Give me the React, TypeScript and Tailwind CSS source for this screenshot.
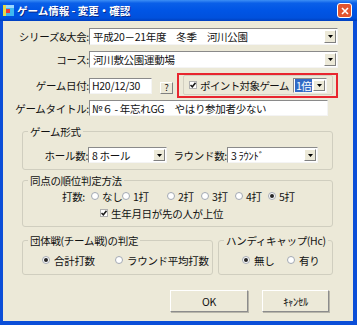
import React from "react";

function DropBtn() {
  return (
    <span className="my-[1px] mr-[1px] flex w-[12px] shrink-0 items-center justify-center border border-t-white border-l-white border-b-[#808080] border-r-[#808080] bg-[#ece9d8]">
      <svg width="5" height="3" viewBox="0 0 5 3">
        <path d="M0 0H5L2.5 3Z" fill="#000" />
      </svg>
    </span>
  );
}

function Combo({ value, className }: { value: React.ReactNode; className: string }) {
  return (
    <div
      className={`flex shrink-0 items-stretch border border-t-[#8a8a8a] border-l-[#8a8a8a] border-b-[#f4f4f4] border-r-[#f4f4f4] bg-white ${className}`}
    >
      <div className="flex flex-1 items-center overflow-hidden pl-[3px]">{value}</div>
      <DropBtn />
    </div>
  );
}

function TextBox({ value, className }: { value: string; className: string }) {
  return (
    <div
      className={`flex shrink-0 items-center overflow-hidden border border-t-[#8a8a8a] border-l-[#8a8a8a] border-b-[#f4f4f4] border-r-[#f4f4f4] bg-white pl-[2px] ${className}`}
    >
      {value}
    </div>
  );
}

function Radio({ checked = false }: { checked?: boolean }) {
  return (
    <span className="inline-flex h-[8px] w-[8px] shrink-0 items-center justify-center rounded-full border border-[#a3a9b3] bg-white">
      {checked && <span className="h-[4px] w-[4px] rounded-full bg-[#262626]" />}
    </span>
  );
}

function Check() {
  return (
    <span className="inline-flex h-[8px] w-[8px] shrink-0 items-center justify-center border border-[#b0b0b0] bg-white">
      <svg width="6" height="6" viewBox="0 0 6 6">
        <path d="M0.5 3L2.3 4.8L5.5 0.8" stroke="#1a1a1a" strokeWidth="1.5" fill="none" />
      </svg>
    </span>
  );
}

function Group({ title, className, children }: { title: string; className: string; children: React.ReactNode }) {
  return (
    <fieldset className={`rounded-[3px] border border-[#d0cebf] ${className}`}>
      <legend className="ml-[5px] px-[2px] leading-[13px]">{title}</legend>
      {children}
    </fieldset>
  );
}

export default function App() {
  return (
    <div className="flex h-[325px] w-[357px] flex-col whitespace-nowrap font-['Noto_Sans_CJK_JP',sans-serif] text-[10.5px] leading-[13px] tracking-[-0.3px] text-[#111]">
      {/* title bar */}
      <div className="flex h-[21px] shrink-0 items-center bg-[linear-gradient(180deg,#3d8ff5_0%,#0a5fe8_15%,#0055e5_50%,#0051dd_85%,#003fbf_100%)] pl-[3px] pr-[5px]">
        <svg width="11" height="11" viewBox="0 0 11 11">
          <rect width="11" height="11" fill="#3fb8f0" />
          <rect width="11" height="3" fill="#9bd8ff" />
          <rect width="3" height="11" fill="#e6dc48" />
          <rect x="3" y="4" width="4" height="4" fill="#f03a3a" />
        </svg>
        <span className="ml-[3px] text-[10.5px] font-bold tracking-[0px] text-white [text-shadow:1px_1px_0_#0a2a8a]">
          ゲーム情報 - 変更・確認
        </span>
        <span className="ml-auto flex h-[15px] w-[15px] items-center justify-center rounded-[3px] border border-white bg-[#e2552f]">
          <svg width="8" height="8" viewBox="0 0 8 8">
            <path d="M1 1L7 7M7 1L1 7" stroke="#fff" strokeWidth="1.6" />
          </svg>
        </span>
      </div>

      {/* body */}
      <div className="flex flex-1 flex-col border-l-[3px] border-r-[4px] border-b-[4px] border-[#0b4ed8] bg-[#ece9d8]">
        <div className="mt-[7px] flex h-[17px] items-center">
          <span className="w-[86px] shrink-0 text-right">シリーズ&大会:</span>
          <Combo className="h-[17px] w-[249px]" value="平成20－21年度　冬季　河川公園" />
        </div>

        <div className="mt-[6px] flex h-[17px] items-center">
          <span className="w-[86px] shrink-0 text-right">コース:</span>
          <Combo className="h-[17px] w-[249px]" value="河川敷公園運動場" />
        </div>

        <div className="mt-[5px] flex h-[25px] items-center">
          <span className="w-[86px] shrink-0 text-right">ゲーム日付:</span>
          <TextBox className="h-[16px] w-[63px]" value="H20/12/30" />
          <span className="ml-[8px] mt-[4px] flex h-[12px] w-[13px] shrink-0 items-center justify-center border border-t-white border-l-white border-b-[#808080] border-r-[#808080] text-[9px] leading-none">
            ?
          </span>
          <div className="ml-[4px] flex h-[25px] w-[161px] shrink-0 border-2 border-[#e8262f]">
            <div className="mb-[1px] ml-[4px] mr-[3px] flex flex-1 items-center rounded-[2px] border border-[#d3d0c1] pl-[5px]">
              <Check />
              <span className="ml-[3px] tracking-[-0.6px]">ポイント対象ゲーム</span>
              <div className="ml-auto mr-[5px] flex h-[15px] w-[34px] shrink-0 items-stretch border border-t-[#8a8a8a] border-l-[#8a8a8a] border-b-[#f4f4f4] border-r-[#f4f4f4] bg-white">
                <div className="flex flex-1 items-center overflow-hidden pl-[1px]">
                  <span className="bg-[#316ac5] px-[1px] tracking-[-0.5px] text-white">1倍</span>
                </div>
                <DropBtn />
              </div>
            </div>
          </div>
        </div>

        <div className="mt-[2px] flex h-[16px] items-center">
          <span className="w-[86px] shrink-0 text-right">ゲームタイトル:</span>
          <TextBox className="h-[16px] w-[239px]" value="№６ - 年忘れGG　やはり参加者少ない" />
        </div>

        <Group title="ゲーム形式" className="ml-[19px] mt-[9px] w-[311px] pb-[6px]">
          <div className="mt-[9px] flex h-[16px] items-center">
            <span className="w-[65px] shrink-0 text-right">ホール数:</span>
            <Combo className="h-[16px] w-[79px]" value="8 ホール" />
            <span className="w-[60px] shrink-0 text-right">ラウンド数:</span>
            <Combo className="h-[16px] w-[91px]" value="3 ﾗｳﾝﾄﾞ" />
          </div>
        </Group>

        <Group title="同点の順位判定方法" className="ml-[19px] mt-[4px] w-[311px] pb-[6px]">
          <div className="mt-[2px] flex h-[14px] items-center">
            <span className="w-[62px] shrink-0 text-right">打数:</span>
            <span className="ml-[6px] flex w-[31px] shrink-0 items-center gap-[3px]">
              <Radio />
              なし
            </span>
            <span className="flex w-[45px] shrink-0 items-center gap-[3px]">
              <Radio />
              1打
            </span>
            <span className="flex w-[34px] shrink-0 items-center gap-[3px]">
              <Radio />
              2打
            </span>
            <span className="flex w-[34px] shrink-0 items-center gap-[3px]">
              <Radio />
              3打
            </span>
            <span className="flex w-[33px] shrink-0 items-center gap-[3px]">
              <Radio />
              4打
            </span>
            <span className="flex shrink-0 items-center gap-[3px]">
              <Radio checked />
              5打
            </span>
          </div>
          <div className="mt-[3px] flex h-[14px] items-center pl-[77px]">
            <Check />
            <span className="ml-[3px]">生年月日が先の人が上位</span>
          </div>
        </Group>

        <div className="ml-[19px] mt-[7px] flex gap-[5px]">
          <Group title="団体戦(チーム戦)の判定" className="w-[191px] shrink-0 pb-[7px]">
            <div className="mt-[6px] flex h-[14px] items-center pl-[19px]">
              <span className="flex w-[73px] shrink-0 items-center gap-[4px]">
                <Radio checked />
                合計打数
              </span>
              <span className="flex shrink-0 items-center gap-[4px]">
                <Radio />
                ラウンド平均打数
              </span>
            </div>
          </Group>
          <Group title="ハンディキャップ(Hc)" className="w-[115px] shrink-0 pb-[7px]">
            <div className="mt-[6px] flex h-[14px] items-center pl-[23px]">
              <span className="flex w-[45px] shrink-0 items-center gap-[4px]">
                <Radio checked />
                無し
              </span>
              <span className="flex shrink-0 items-center gap-[4px]">
                <Radio />
                有り
              </span>
            </div>
          </Group>
        </div>

        <div className="ml-[167px] mt-[15px] flex gap-[14px]">
          <button className="flex h-[22px] w-[78px] items-center justify-center border border-t-white border-l-white border-b-[#8c8c8c] border-r-[#8c8c8c] bg-[#ece9d8] shadow-[1px_1px_0_#b8b6aa]">
            OK
          </button>
          <button className="flex h-[22px] w-[67px] items-center justify-center border border-t-white border-l-white border-b-[#8c8c8c] border-r-[#8c8c8c] bg-[#ece9d8] shadow-[1px_1px_0_#b8b6aa]">
            ｷｬﾝｾﾙ
          </button>
        </div>
      </div>
    </div>
  );
}
